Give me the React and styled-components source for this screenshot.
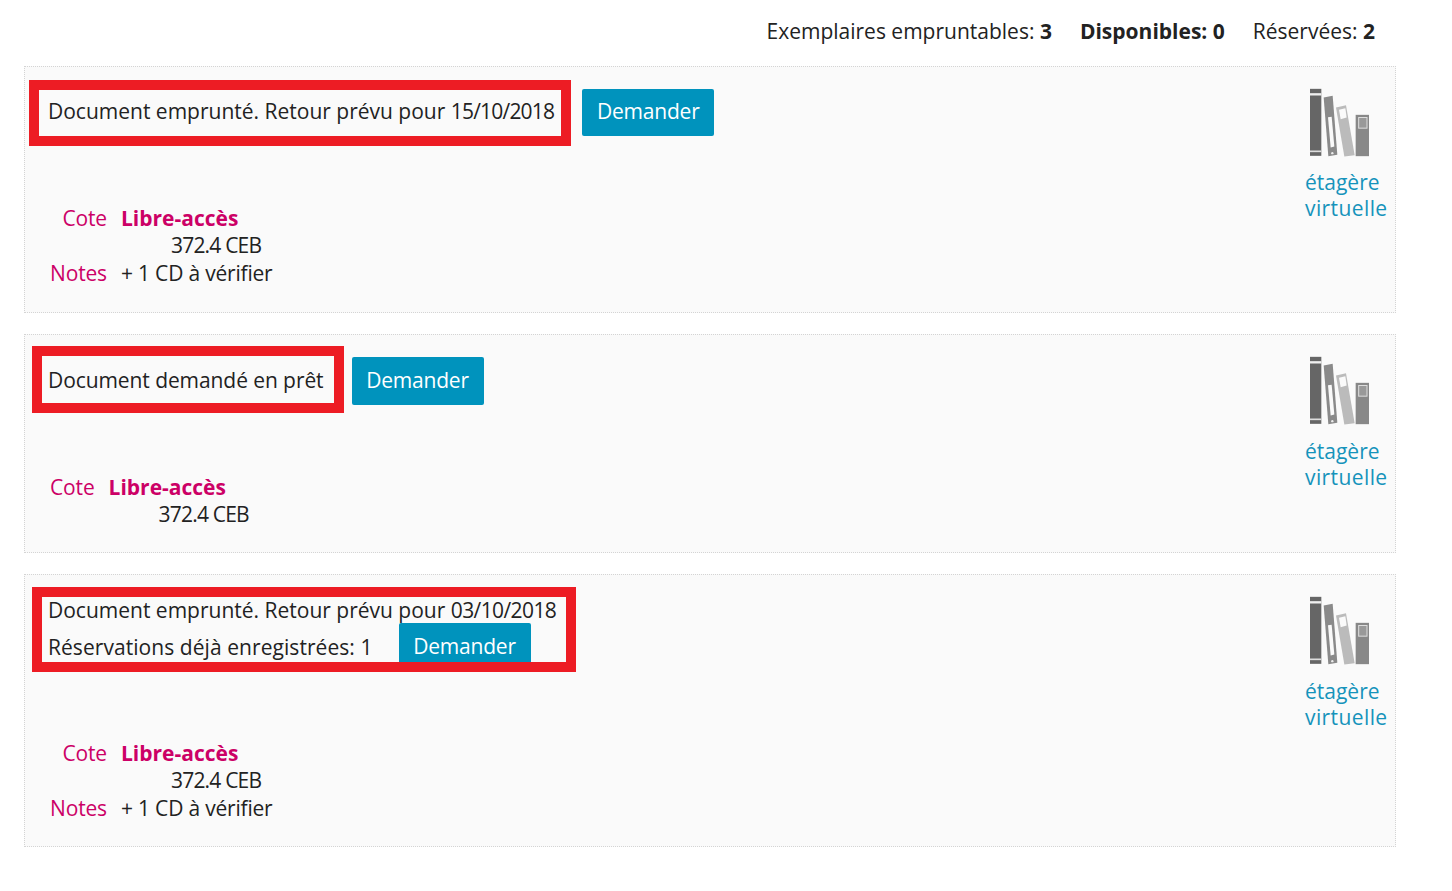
import React from 'react';
import styled, { createGlobalStyle } from 'styled-components';

const GlobalStyle = createGlobalStyle`
  html, body { margin: 0; padding: 0; background: #fff; }
  body {
    font-family: "Open Sans", "Noto Sans", sans-serif;
    font-size: 21px;
    color: #222;
  }
`;

const Page = styled.div`
  padding: 18px 56px 0 24px;
`;

const Counts = styled.div`
  display: flex;
  justify-content: flex-end;
  gap: 28px;
  height: 27px;
  line-height: 27px;
  margin: 0 21px 21px 0;
`;

const Count = styled.span`
  font-weight: ${({ $strong }) => ($strong ? 700 : 400)};
  b { font-weight: 700; }
`;

const Card = styled.section`
  display: flex;
  justify-content: space-between;
  background: #fafafa;
  border: 1px dotted #d4d4d4;
  padding: ${({ $top }) => $top}px 7px 0 ${({ $left }) => $left}px;
  height: ${({ $height }) => $height}px;
  box-sizing: border-box;
  margin-bottom: 21px;
`;

const Main = styled.div`
  display: flex;
  flex-direction: column;
`;

const StatusRow = styled.div`
  display: flex;
  align-items: center;
  gap: ${({ $gap }) => $gap}px;
`;

const Notice = styled.div`
  border: 10px solid #ed1c24;
  background: #fafafa;
  box-sizing: border-box;
  overflow: hidden;
  height: ${({ $height }) => $height}px;
  padding: 0 ${({ $right }) => $right}px 0 ${({ $left }) => $left}px;
  line-height: ${({ $line }) => $line}px;
  letter-spacing: ${({ $spacing }) => $spacing || 0}px;
  white-space: nowrap;
`;

const NoticeLine = styled.div`
  line-height: 26px;
`;

const NoticeRow = styled.div`
  display: flex;
  align-items: center;
  gap: 26px;
  height: 48px;
  letter-spacing: 0.06px;
`;

const DateText = styled.span`
  letter-spacing: ${({ $tight }) => $tight}px;
`;

const Button = styled.button`
  font: inherit;
  line-height: 1;
  letter-spacing: -0.2px;
  color: #fff;
  background: #0093bd;
  border: 0;
  border-radius: 2px;
  width: 132px;
  height: ${({ $height }) => $height}px;
  margin: ${({ $shift }) => $shift || '0'};
  padding: 0 0 2px;
  flex: none;
`;

const Meta = styled.dl`
  display: grid;
  grid-template-columns: auto 1fr;
  column-gap: 14px;
  row-gap: 1px;
  margin: ${({ $top }) => $top}px 0 0 ${({ $left }) => $left}px;
  line-height: 27px;
`;

const Label = styled.dt`
  color: #cc0066;
  text-align: right;
  letter-spacing: -0.15px;
`;

const Value = styled.dd`
  margin: 0;
`;

const Location = styled.div`
  color: #cc0066;
  font-weight: 700;
`;

const Shelfmark = styled.div`
  padding-left: 50px;
  letter-spacing: -0.8px;
`;

const Note = styled(Value)`
  letter-spacing: -0.2px;
`;

const Shelf = styled.a`
  display: block;
  width: 83px;
  color: #1593bb;
  line-height: 26px;
  margin-top: ${({ $top }) => $top}px;
  text-decoration: none;
  white-space: nowrap;

  svg {
    display: block;
    margin: 0 0 ${({ $gap }) => $gap}px 5px;
  }
`;

const ShelfWord = styled.span`
  display: block;
  letter-spacing: ${({ $wide }) => ($wide ? '0.4px' : '0')};
`;

function ShelfIcon() {
  return (
    <svg width="60" height="69" viewBox="0 0 180 206" aria-hidden="true">
      <rect x="0" y="2" width="34" height="201" fill="#666" />
      <rect x="0" y="15" width="34" height="7" fill="#f0f0f0" />
      <rect x="0" y="187" width="34" height="5" fill="#ddd" />
      <polygon points="41,28 68,23 82,200 55,204" fill="#8a8a8a" />
      <polygon points="54,87 65,86 73,175 62,178" fill="#fafafa" />
      <circle cx="67" cy="195" r="3.5" fill="#eee" />
      <polygon points="78,58 108,51 134,201 103,205" fill="#bbb" />
      <polygon points="87,65 106,60 110,88 92,93" fill="#fafafa" />
      <rect x="137" y="80" width="40" height="124" fill="#888" />
      <rect x="146" y="88" width="25" height="32" fill="#999" stroke="#ddd" strokeWidth="3" />
    </svg>
  );
}

function VirtualShelf({ top, gap }) {
  return (
    <Shelf $top={top} $gap={gap}>
      <ShelfIcon />
      <ShelfWord>étagère</ShelfWord>
      <ShelfWord $wide>virtuelle</ShelfWord>
    </Shelf>
  );
}

function CopyMeta({ top, left, notes }) {
  return (
    <Meta $top={top} $left={left}>
      <Label>Cote</Label>
      <Value>
        <Location>Libre-accès</Location>
        <Shelfmark>372.4 CEB</Shelfmark>
      </Value>
      {notes && <Label>Notes</Label>}
      {notes && <Note>{notes}</Note>}
    </Meta>
  );
}

export default function App() {
  return (
    <>
      <GlobalStyle />
      <Page>
        <Counts>
          <Count>Exemplaires empruntables: <b>3</b></Count>
          <Count $strong>Disponibles: 0</Count>
          <Count>Réservées: <b>2</b></Count>
        </Counts>

        <Card $top={13} $left={4} $height={247}>
          <Main>
            <StatusRow $gap={11}>
              <Notice $height={66} $line={42} $left={9} $right={7}>
                Document emprunté. Retour prévu pour <DateText $tight={-0.8}>15/10/2018</DateText>
              </Notice>
              <Button type="button" $height={47} $shift="0 0 1px">Demander</Button>
            </StatusRow>
            <CopyMeta top={59} left={21} notes="+ 1 CD à vérifier" />
          </Main>
          <VirtualShelf top={8} gap={12} />
        </Card>

        <Card $top={11} $left={7} $height={219}>
          <Main>
            <StatusRow $gap={8}>
              <Notice $height={67} $line={49} $left={6} $right={10} $spacing={-0.08}>
                Document demandé en prêt
              </Notice>
              <Button type="button" $height={48} $shift="3px 0 0">Demander</Button>
            </StatusRow>
            <CopyMeta top={61} left={18} />
          </Main>
          <VirtualShelf top={10} gap={13} />
        </Card>

        <Card $top={12} $left={7} $height={273}>
          <Main>
            <Notice $height={85} $line={26} $left={6} $right={10}>
              <NoticeLine>
                Document emprunté. Retour prévu pour <DateText $tight={-0.6}>03/10/2018</DateText>
              </NoticeLine>
              <NoticeRow>
                <span>Réservations déjà enregistrées: 1</span>
                <Button type="button" $height={48}>Demander</Button>
              </NoticeRow>
            </Notice>
            <CopyMeta top={68} left={18} notes="+ 1 CD à vérifier" />
          </Main>
          <VirtualShelf top={9} gap={13} />
        </Card>
      </Page>
    </>
  );
}
